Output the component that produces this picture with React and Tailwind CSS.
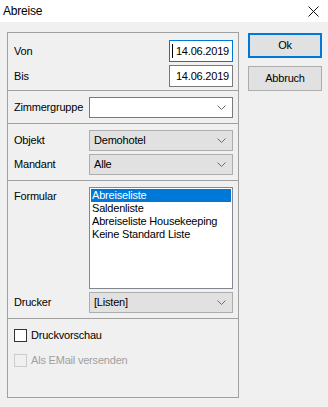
import React from 'react';

// --- small chevron used by the combo boxes ---
const Chevron = () => (
  <svg width="9" height="5" viewBox="0 0 9 5" className="shrink-0">
    <polyline points="0.5,0.5 4.5,4.5 8.5,0.5" fill="none" stroke="#6b6b6b" strokeWidth="1" />
  </svg>
);

// --- combo box (white when editable, grey when a dropdown list) ---
const Combo = ({ value, white }) => (
  <div
    className={
      white
        ? 'flex h-[21px] w-[144px] shrink-0 items-center justify-between border border-[#7a7a7a] bg-white pl-[4px] pr-[6px]'
        : 'flex h-[21px] w-[144px] shrink-0 items-center justify-between border border-[#adadad] bg-[#e1e1e1] pl-[4px] pr-[6px]'
    }
  >
    <span>{value}</span>
    <Chevron />
  </div>
);

const Row = ({ label, children }) => (
  <div className="flex items-center">
    <span className="w-[81px] shrink-0 whitespace-nowrap pl-[6px]">{label}</span>
    {children}
  </div>
);

const DateField = ({ value, focused }) => (
  <div
    className={
      focused
        ? 'relative ml-auto flex h-[22px] w-[64px] items-center justify-end border border-[#0078d7] bg-white pr-[3px]'
        : 'ml-auto flex h-[22px] w-[64px] items-center justify-end border border-[#7a7a7a] bg-white pr-[3px]'
    }
  >
    {focused && <span className="absolute left-[2px] top-[3px] h-[14px] w-px bg-black" />}
    {value}
  </div>
);

const Checkbox = ({ label, disabled }) => (
  <div className={disabled ? 'flex items-center text-[#a0a0a0]' : 'flex items-center'}>
    <span
      className={
        disabled
          ? 'ml-[6px] mr-[4px] h-[13px] w-[13px] border border-[#cccccc] bg-[#f0f0f0]'
          : 'ml-[6px] mr-[4px] h-[13px] w-[13px] border border-[#333333] bg-white'
      }
    />
    <span>{label}</span>
  </div>
);

const formulare = ['Abreiseliste', 'Saldenliste', 'Abreiseliste Housekeeping', 'Keine Standard Liste'];

export default function App() {
  return (
    <div
      className="h-[407px] w-[328px] overflow-hidden bg-[#f0f0f0] text-[11px] leading-none tracking-[-0.2px] text-black"
      style={{ fontFamily: '"Liberation Sans", Arial, sans-serif' }}
    >
      {/* title bar */}
      <div className="flex h-[22px] items-center justify-between bg-white pl-[3px] pr-[9px]">
        <span className="text-[12px]">Abreise</span>
        <svg width="11" height="11" viewBox="0 0 11 11">
          <path d="M0.5 0.5 L10.5 10.5 M10.5 0.5 L0.5 10.5" stroke="#111" strokeWidth="1" />
        </svg>
      </div>

      <div className="flex pl-[7px] pt-[10px]">
        {/* main group box */}
        <div className="flex h-[366px] w-[232px] flex-col border border-[#a0a0a0]">
          <div className="flex h-[58px] flex-col gap-[3px] border-b border-[#a0a0a0] pr-[5px] pt-[7px]">
            <Row label="Von">
              <DateField value="14.06.2019" focused />
            </Row>
            <Row label="Bis">
              <DateField value="14.06.2019" />
            </Row>
          </div>

          <div className="flex h-[33px] flex-col border-b border-[#a0a0a0] pt-[6px]">
            <Row label="Zimmergruppe">
              <Combo value="" white />
            </Row>
          </div>

          <div className="flex h-[57px] flex-col gap-[3px] border-b border-[#a0a0a0] pt-[6px]">
            <Row label="Objekt">
              <Combo value="Demohotel" />
            </Row>
            <Row label="Mandant">
              <Combo value="Alle" />
            </Row>
          </div>

          <div className="flex h-[138px] flex-col gap-[3px] border-b border-[#a0a0a0] pt-[6px]">
            <div className="flex">
              <span className="w-[81px] shrink-0 pl-[6px] pt-[4px]">Formular</span>
              <div className="flex h-[102px] w-[144px] shrink-0 flex-col border border-[#828790] bg-white p-px">
                {formulare.map((f, i) => (
                  <div
                    key={f}
                    className={
                      i === 0
                        ? 'flex h-[13px] items-center bg-[#0078d7] pl-[1px] text-white'
                        : 'flex h-[13px] items-center pl-[1px]'
                    }
                  >
                    {f}
                  </div>
                ))}
              </div>
            </div>
            <Row label="Drucker">
              <Combo value="[Listen]" />
            </Row>
          </div>

          <div className="flex flex-col gap-[12px] pt-[10px]">
            <Checkbox label="Druckvorschau" />
            <Checkbox label="Als EMail versenden" disabled />
          </div>
        </div>

        {/* buttons */}
        <div className="ml-[9px] flex flex-col gap-[8px] pt-px">
          <button className="flex h-[25px] w-[74px] items-center justify-center border-2 border-[#0078d7] bg-[#e1e1e1]">
            Ok
          </button>
          <button className="flex h-[25px] w-[74px] items-center justify-center border border-[#adadad] bg-[#e1e1e1]">
            Abbruch
          </button>
        </div>
      </div>
    </div>
  );
}
